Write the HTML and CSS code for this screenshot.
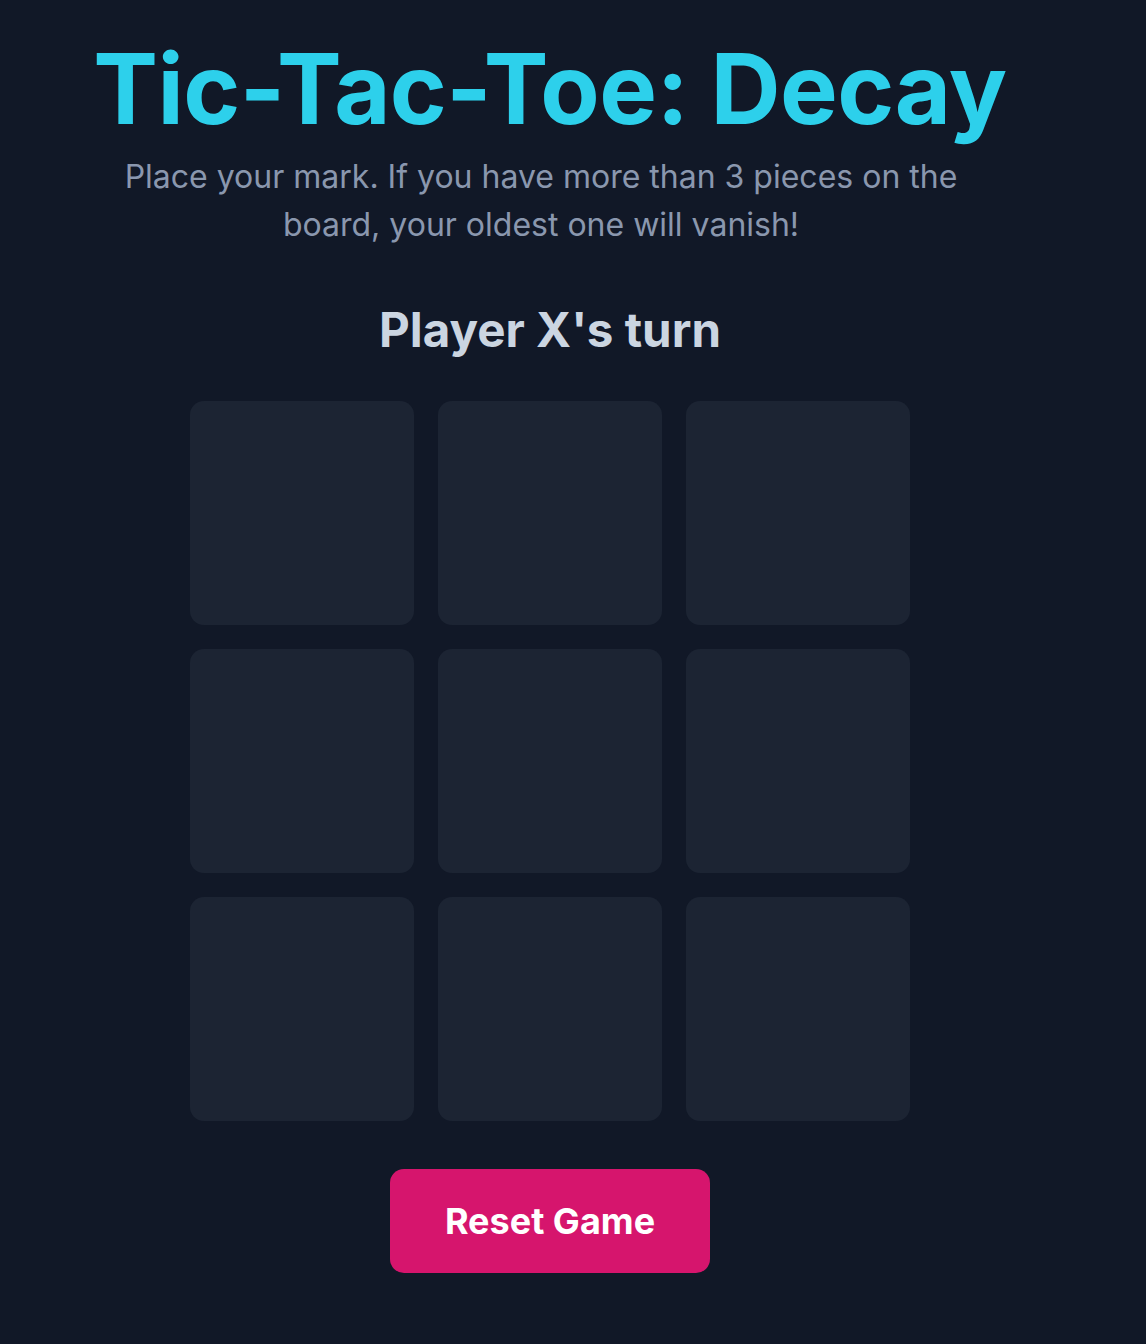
FILE: index.html
```html
<!DOCTYPE html>
<html lang="en">
<head>
<meta charset="utf-8">
<title>Tic-Tac-Toe: Decay</title>
<link rel="stylesheet" href="styles.css">
</head>
<body>
<main class="app">
  <h1 class="title">Tic-Tac-Toe: Decay</h1>
  <p class="subtitle">Place your mark. If you have more than 3 pieces on the board, your oldest one will vanish!</p>
  <h2 class="status">Player X's turn</h2>
  <div class="board">
    <button class="cell"></button>
    <button class="cell"></button>
    <button class="cell"></button>
    <button class="cell"></button>
    <button class="cell"></button>
    <button class="cell"></button>
    <button class="cell"></button>
    <button class="cell"></button>
    <button class="cell"></button>
  </div>
  <button class="reset">Reset Game</button>
</main>
</body>
</html>
```

FILE: styles.css
```css
html, body {
  margin: 0;
  padding: 0;
  background: #111827;
  min-height: 100%;
}
body {
  font-family: Inter, "Noto Sans", sans-serif;
}
.app {
  width: 1100px;
  display: flex;
  flex-direction: column;
  align-items: center;
  padding-top: 40px;
}
.title {
  margin: 0;
  font-size: 97px;
  line-height: 1;
  font-weight: 700;
  color: #2dd0eb;
  letter-spacing: -0.006em;
}
.subtitle {
  margin: 16px 0 0;
  width: 860px;
  padding-right: 18px;
  text-align: center;
  font-size: 32px;
  line-height: 48px;
  color: #8a97ae;
}
.status {
  margin: 53px 0 0;
  font-size: 47.5px;
  line-height: 56px;
  font-weight: 700;
  color: #cbd5e1;
}
.board {
  margin-top: 43px;
  display: grid;
  grid-template-columns: repeat(3, 224px);
  grid-auto-rows: 224px;
  gap: 24px;
}
.cell {
  border: none;
  padding: 0;
  background: #1c2433;
  border-radius: 14px;
}
.reset {
  margin-top: 48px;
  width: 320px;
  height: 104px;
  border: none;
  border-radius: 14px;
  background: #d6156d;
  color: #ffffff;
  font-family: Inter, "Noto Sans", sans-serif;
  font-size: 36px;
  font-weight: 700;
}
```
